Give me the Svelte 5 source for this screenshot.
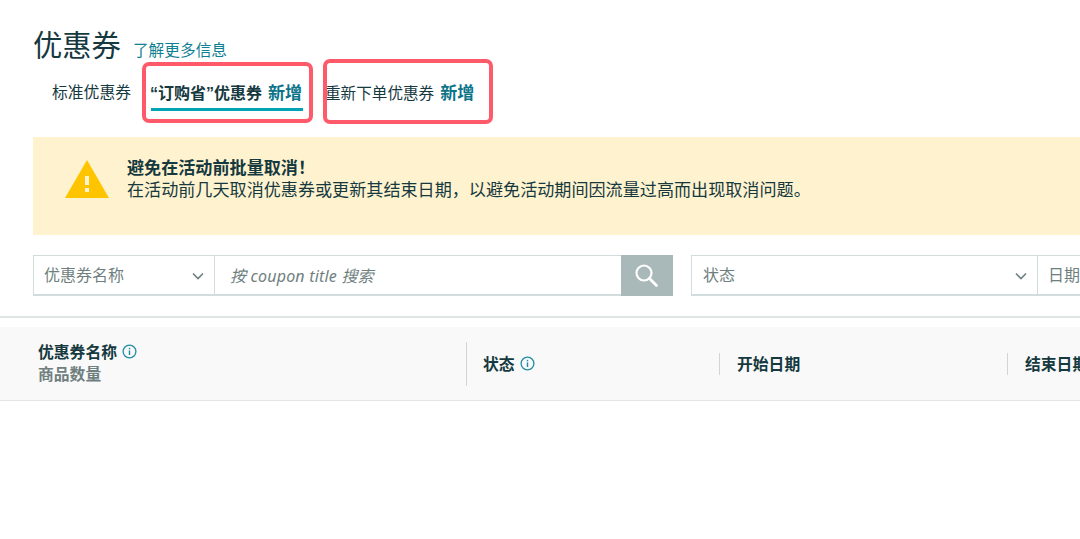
<script>
  const columns = [
    { label: '状态', info: true, cls: 'status' },
    { label: '开始日期', info: false, cls: 'start' },
    { label: '结束日期', info: false, cls: 'end' }
  ];
</script>

<div class="page">
  <header class="title-row">
    <h1>优惠券</h1>
    <a class="learn" href="#learn">了解更多信息</a>
  </header>

  <nav class="tabs">
    <div class="tab plain">标准优惠券</div>
    <div class="tab active">
      <div class="tab-inner">
        <span class="tab-label">“订购省”优惠券</span><span class="new">新增</span>
      </div>
      <span class="mark mark-a"></span>
    </div>
    <div class="tab third">
      <span>重新下单优惠券</span><span class="new">新增</span>
      <span class="mark mark-b"></span>
    </div>
  </nav>

  <section class="banner">
    <svg class="warn" width="44" height="38" viewBox="0 0 44 38" aria-hidden="true">
      <path d="M22 0 L44 38 L0 38 Z" fill="#ffc400" />
      <rect x="20" y="16" width="4" height="9" fill="#fff3cf" />
      <rect x="20" y="28" width="4" height="4" fill="#fff3cf" />
    </svg>
    <div class="banner-text">
      <strong>避免在活动前批量取消！</strong>
      <p>在活动前几天取消优惠券或更新其结束日期，以避免活动期间因流量过高而出现取消问题。</p>
    </div>
  </section>

  <div class="filters">
    <div class="select name-select">
      <span>优惠券名称</span>
      <svg width="12" height="8" viewBox="0 0 12 8" aria-hidden="true"><path d="M1 1.5 L6 6.5 L11 1.5" fill="none" stroke="#6f7f80" stroke-width="1.6" /></svg>
    </div>
    <div class="search-input"><em>按 coupon title 搜索</em></div>
    <button class="search-btn" aria-label="搜索">
      <svg width="24" height="24" viewBox="0 0 24 24" aria-hidden="true">
        <circle cx="9" cy="9" r="7.5" fill="none" stroke="#fff" stroke-width="2.2" />
        <path d="M14.5 14.5 L21.5 21.5" stroke="#fff" stroke-width="2.8" stroke-linecap="round" />
      </svg>
    </button>
    <div class="select status-select">
      <span>状态</span>
      <svg width="12" height="8" viewBox="0 0 12 8" aria-hidden="true"><path d="M1 1.5 L6 6.5 L11 1.5" fill="none" stroke="#6f7f80" stroke-width="1.6" /></svg>
    </div>
    <div class="select date-select"><span>日期</span></div>
  </div>

  <hr class="rule" />

  <div class="thead">
    <div class="col name">
      <div class="name-line">
        <span class="th">优惠券名称</span>
        <svg class="info" width="15" height="15" viewBox="0 0 15 15" aria-hidden="true">
          <circle cx="7.5" cy="7.5" r="6.4" fill="none" stroke="#1f8ea3" stroke-width="1.3" />
          <rect x="6.8" y="6.4" width="1.4" height="4.6" fill="#1f8ea3" />
          <rect x="6.8" y="3.8" width="1.4" height="1.5" fill="#1f8ea3" />
        </svg>
      </div>
      <div class="sub">商品数量</div>
    </div>
    {#each columns as c}
      <div class="col {c.cls}">
        <span class="th">{c.label}</span>
        {#if c.info}
          <svg class="info" width="15" height="15" viewBox="0 0 15 15" aria-hidden="true">
            <circle cx="7.5" cy="7.5" r="6.4" fill="none" stroke="#1f8ea3" stroke-width="1.3" />
            <rect x="6.8" y="6.4" width="1.4" height="4.6" fill="#1f8ea3" />
            <rect x="6.8" y="3.8" width="1.4" height="1.5" fill="#1f8ea3" />
          </svg>
        {/if}
      </div>
    {/each}
  </div>
</div>

<style>
  :global(body) {
    margin: 0;
    background: #fff;
  }
  .page {
    width: 1080px;
    height: 539px;
    overflow: hidden;
    box-sizing: border-box;
    padding-top: 25px;
    color: #16393f;
    font-family: "Noto Sans CJK SC", "Noto Sans", sans-serif;
    font-size: 16px;
  }
  .title-row {
    display: flex;
    align-items: baseline;
    gap: 12px;
    padding-left: 33px;
    height: 38px;
  }
  h1 {
    margin: 0;
    font-size: 29.3px;
    font-weight: 400;
    line-height: 36px;
  }
  .learn {
    color: #0f7f92;
    font-size: 15.7px;
    text-decoration: none;
    position: relative;
    top: 0;
  }
  .tabs {
    display: flex;
    height: 48px;
    padding-left: 52px;
  }
  .tab {
    position: relative;
    display: flex;
    align-items: baseline;
    line-height: 24px;
    padding-top: 17px;
    box-sizing: border-box;
    height: 48px;
    white-space: nowrap;
  }
  .plain {
    width: 99px;
    font-size: 15.8px;
  }
  .active {
    width: 152px;
    margin-right: 22px;
    border-bottom: 3px solid #00a5b5;
  }
  .tab-inner {
    display: flex;
    align-items: baseline;
    margin-left: -1px;
  }
  .tab-label {
    font-family: "Liberation Sans", "Noto Sans CJK SC", sans-serif;
    font-weight: 700;
    font-size: 16px;
  }
  .new {
    margin-left: 6px;
    color: #0b7489;
    font-weight: 700;
    font-size: 17px;
  }
  .third {
    font-size: 15.6px;
  }
  .mark {
    position: absolute;
    border: 4px solid #ff5a6a;
    border-radius: 7px;
    box-sizing: border-box;
  }
  .mark-a {
    left: -9px;
    top: -1px;
    width: 171px;
    height: 61px;
  }
  .mark-b {
    left: -2px;
    top: -4px;
    width: 170px;
    height: 65px;
  }
  .banner {
    display: flex;
    align-items: flex-start;
    gap: 18px;
    height: 98px;
    margin: 26px 0 0 33px;
    padding: 23px 0 0 32px;
    box-sizing: border-box;
    background: #fff3cf;
  }
  .banner-text {
    margin-top: -4px;
    font-size: 17.1px;
    line-height: 22px;
  }
  .banner-text strong {
    font-weight: 700;
    display: block;
  }
  .banner-text p {
    margin: 0;
    white-space: nowrap;
  }
  .filters {
    display: flex;
    height: 41px;
    margin: 20px 0 0 33px;
    color: #6f7f80;
    font-size: 16px;
  }
  .select {
    display: flex;
    align-items: center;
    justify-content: space-between;
    box-sizing: border-box;
    flex: none;
    border: 1px solid #d3dcdc;
    border-bottom-width: 2px;
    padding: 0 10px 3px 10px;
    background: #fff;
  }
  .select svg {
    margin-top: 4px;
  }
  .name-select {
    width: 182px;
  }
  .search-input {
    width: 406px;
    box-sizing: border-box;
    flex: none;
    display: flex;
    align-items: center;
    border: 1px solid #d3dcdc;
    border-left: 0;
    border-right: 0;
    border-bottom-width: 2px;
    padding: 0 15px 1px;
  }
  .search-input em {
    font-family: "Noto Sans", "Noto Sans CJK SC", sans-serif;
    font-size: 16px;
    letter-spacing: 0.2px;
  }
  .search-btn {
    width: 52px;
    flex: none;
    border: 0;
    padding: 0;
    background: #a9b8b8;
    display: flex;
    align-items: center;
    justify-content: center;
  }
  .status-select {
    width: 347px;
    margin-left: 18px;
    padding-left: 11px;
  }
  .date-select {
    width: 120px;
    border-left: 0;
    justify-content: flex-start;
  }
  .rule {
    margin: 20px 0 0;
    border: 0;
    height: 2px;
    background: #e0e5e5;
  }
  .thead {
    display: flex;
    align-items: center;
    height: 74px;
    margin-top: 9px;
    box-sizing: border-box;
    background: #f9f9f9;
    border-bottom: 1px solid #e3e6e6;
    white-space: nowrap;
  }
  .col {
    position: relative;
    box-sizing: border-box;
    flex: none;
    display: flex;
    align-items: center;
    gap: 5px;
    padding-left: 17px;
    height: 22px;
    border-left: 1px solid #cfd6d6;
  }
  .th {
    font-weight: 700;
    font-size: 15.8px;
    line-height: 22px;
  }
  .info {
    flex: none;
  }
  .name {
    width: 466px;
    display: block;
    height: auto;
    padding-left: 38px;
    padding-bottom: 2px;
    border-left: 0;
  }
  .name-line {
    display: flex;
    align-items: center;
    gap: 5px;
  }
  .sub {
    color: #6f7f80;
    font-weight: 700;
    font-size: 15.8px;
    line-height: 22px;
  }
  .status {
    width: 253px;
    height: 44px;
    padding-left: 16px;
  }
  .start {
    width: 288px;
  }
  .end {
    width: 80px;
  }
</style>
